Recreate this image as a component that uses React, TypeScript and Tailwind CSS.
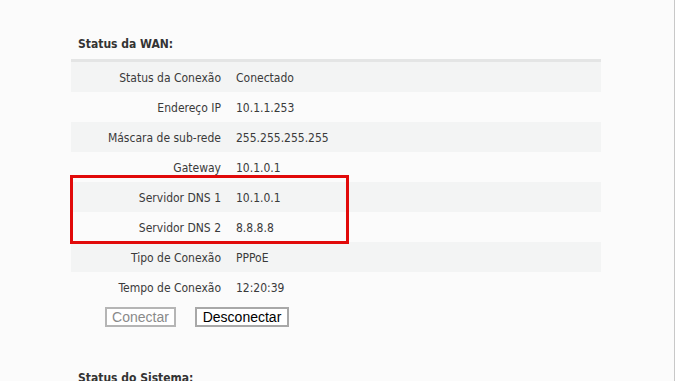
import React from "react"

const rows = [
  ["Status da Conexão", "Conectado"],
  ["Endereço IP", "10.1.1.253"],
  ["Máscara de sub-rede", "255.255.255.255"],
  ["Gateway", "10.1.0.1"],
  ["Servidor DNS 1", "10.1.0.1"],
  ["Servidor DNS 2", "8.8.8.8"],
  ["Tipo de Conexão", "PPPoE"],
  ["Tempo de Conexão", "12:20:39"],
]

function Row({ label, value, shaded }: { label: string; value: string; shaded: boolean }) {
  return (
    <div className={`flex h-[30px] items-center pt-[1px] ${shaded ? "bg-[#f3f4f4]" : ""}`}>
      <div className="w-[165px] pr-[15px] text-right">{label}</div>
      <div>{value}</div>
    </div>
  )
}

export default function App() {
  return (
    <div
      className="h-[381px] w-[675px] overflow-hidden border-r border-[#c8c8c8] bg-[#fbfbfb] text-[12px] text-[#3a3a3a]"
      style={{ fontFamily: '"DejaVu Sans Condensed", "DejaVu Sans", sans-serif' }}
    >
      <div className="pl-[71px] pt-[36px]">
        <div className="pl-[7px] text-[12px] font-bold text-[#333] leading-[16px]">Status da WAN:</div>
        <div className="mt-[7px] w-[530px] border-t-[3px] border-[#e4e5e5]">
          {rows.slice(0, 4).map((r, i) => (
            <Row key={r[0]} label={r[0]} value={r[1]} shaded={i % 2 === 0} />
          ))}
          <div className="relative">
            {rows.slice(4, 6).map((r, i) => (
              <Row key={r[0]} label={r[0]} value={r[1]} shaded={i % 2 === 0} />
            ))}
            <div className="absolute left-[-1px] top-[-7px] h-[69px] w-[279px] border-[3px] border-[#e10a0a]" />
          </div>
          {rows.slice(6).map((r, i) => (
            <Row key={r[0]} label={r[0]} value={r[1]} shaded={i % 2 === 0} />
          ))}
        </div>
        <div
          className="mt-[5px] flex gap-[19px] pl-[34px] text-[14px]"
          style={{ fontFamily: '"Liberation Sans", Arial, sans-serif' }}
        >
          <button className="h-[20px] w-[71px] border-2 border-[#b5b5b5] bg-white leading-[16px] text-[#8a8a8a]">Conectar</button>
          <button className="h-[20px] w-[94px] border-2 border-[#a8a8a8] bg-white leading-[16px] text-black">Desconectar</button>
        </div>
        <div className="mt-[43px] pl-[7px] font-bold text-[#333] leading-[16px]">Status do Sistema:</div>
      </div>
    </div>
  )
}
